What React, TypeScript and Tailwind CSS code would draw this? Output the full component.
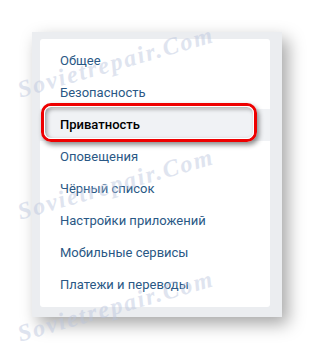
import React from "react";

const items = [
  "Общее",
  "Безопасность",
  "Приватность",
  "Оповещения",
  "Чёрный список",
  "Настройки приложений",
  "Мобильные сервисы",
  "Платежи и переводы",
];

function Watermark({ className }: { className: string }) {
  return (
    <div
      className={
        "absolute -rotate-[16deg] origin-left text-[24px] italic font-bold tracking-[2px] text-[#b9c4dd] opacity-45 font-['Liberation_Serif',serif] pointer-events-none whitespace-nowrap " +
        className
      }
    >
      Sovietrepair.Com
    </div>
  );
}

export default function App() {
  return (
    <div className="relative w-[314px] h-[350px] overflow-hidden bg-white pt-[32px] pl-[32px] font-['Roboto',sans-serif]">
      {/* Screenshot frame */}
      <div className="w-[250px] h-[285px] bg-[#ebedf0] pl-[8px] pr-[12px] pt-[7px] pb-[10px] shadow-[6px_7px_16px_rgba(0,0,0,0.35)]">
        <div className="h-full bg-white rounded-[3px] pt-[6px] flex flex-col">
          {items.map((item, i) =>
            i === 2 ? (
              <div
                key={item}
                className="h-[32px] flex items-center pl-[20px] bg-[#f0f2f5] text-[13px] font-medium text-[#000]"
              >
                {item}
              </div>
            ) : (
              <div
                key={item}
                className="h-[32px] flex items-center pl-[20px] text-[13px] text-[#2a5885]"
              >
                {item}
              </div>
            )
          )}
        </div>
      </div>

      {/* Red highlight annotation */}
      <div className="absolute left-[41px] top-[103px] w-[216px] h-[39px] rounded-[10px] border-[3px] border-[#ee0000] shadow-[2px_3px_5px_rgba(0,0,0,0.45)]">
        <div className="w-full h-full rounded-[7px] border border-white shadow-[inset_2px_2px_4px_rgba(0,0,0,0.35)]" />
      </div>

      {/* Watermarks */}
      <Watermark className="left-[18px] top-[72px]" />
      <Watermark className="left-[18px] top-[194px]" />
      <Watermark className="left-[18px] top-[316px]" />
    </div>
  );
}
